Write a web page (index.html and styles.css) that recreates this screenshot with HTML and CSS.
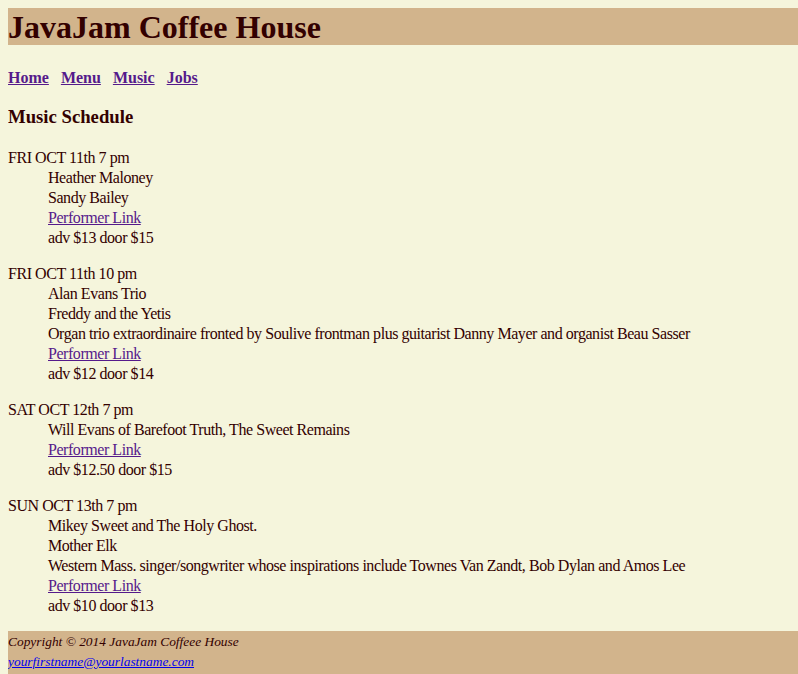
FILE: index.html
```html
<!DOCTYPE html>
<html lang="en">
<head>
<meta charset="utf-8">
<title>JavaJam Coffee House Music</title>
<link rel="stylesheet" href="styles.css">
</head>
<body>
<header class="site-header"><h1 class="site-title">JavaJam Coffee House</h1></header>
<nav class="main-nav">
  <a class="nav-link" href="#">Home</a>
  <a class="nav-link" href="#">Menu</a>
  <a class="nav-link" href="#">Music</a>
  <a class="nav-link" href="#">Jobs</a>
</nav>
<main>
  <h3 class="section-title">Music Schedule</h3>
  <dl class="event">
    <dt>FRI OCT 11th 7 pm</dt>
    <dd>Heather Maloney</dd>
    <dd>Sandy Bailey</dd>
    <dd><a class="perf-link" href="#">Performer Link</a></dd>
    <dd>adv $13 door $15</dd>
  </dl>
  <dl class="event">
    <dt>FRI OCT 11th 10 pm</dt>
    <dd>Alan Evans Trio</dd>
    <dd>Freddy and the Yetis</dd>
    <dd>Organ trio extraordinaire fronted by Soulive frontman plus guitarist Danny Mayer and organist Beau Sasser</dd>
    <dd><a class="perf-link" href="#">Performer Link</a></dd>
    <dd>adv $12 door $14</dd>
  </dl>
  <dl class="event">
    <dt>SAT OCT 12th 7 pm</dt>
    <dd>Will Evans of Barefoot Truth, The Sweet Remains</dd>
    <dd><a class="perf-link" href="#">Performer Link</a></dd>
    <dd>adv $12.50 door $15</dd>
  </dl>
  <dl class="event">
    <dt>SUN OCT 13th 7 pm</dt>
    <dd>Mikey Sweet and The Holy Ghost.</dd>
    <dd>Mother Elk</dd>
    <dd>Western Mass. singer/songwriter whose inspirations include Townes Van Zandt, Bob Dylan and Amos Lee</dd>
    <dd><a class="perf-link" href="#">Performer Link</a></dd>
    <dd>adv $10 door $13</dd>
  </dl>
</main>
<footer class="site-footer">
  <div class="copyright">Copyright &copy; 2014 JavaJam Coffeee House</div>
  <div><a class="email-link" href="#">yourfirstname@yourlastname.com</a></div>
</footer>
</body>
</html>
```
FILE: styles.css
```css
html {
  background: #f5f5dc;
}
body {
  margin: 8px 0 0 8px;
  font-family: "Liberation Serif", "Times New Roman", serif;
  font-size: 16px;
  line-height: 20px;
  color: #330000;
  background: #f5f5dc;
}
.site-header {
  background: #d2b48c;
}
.site-title {
  margin: 0;
  padding-top: 1px;
  font-size: 32px;
  line-height: 36px;
  font-weight: bold;
}
.main-nav {
  display: flex;
  gap: 12px;
  margin-top: 23px;
  font-weight: bold;
}
.nav-link {
  color: #551a8b;
}
.section-title {
  margin: 18px 0 20px;
  font-size: 18.72px;
  line-height: 21.5px;
}
.event {
  margin: 16px 0;
  letter-spacing: -0.45px;
}
.event:last-child {
  margin-bottom: 15px;
}
.event dd {
  margin-left: 40px;
}
.perf-link {
  color: #551a8b;
}
.site-footer {
  background: #d2b48c;
  font-size: 13.4px;
  line-height: 20px;
  font-style: italic;
  padding: 1px 0 8px;
}
.email-link {
  color: #0000ee;
}
```
